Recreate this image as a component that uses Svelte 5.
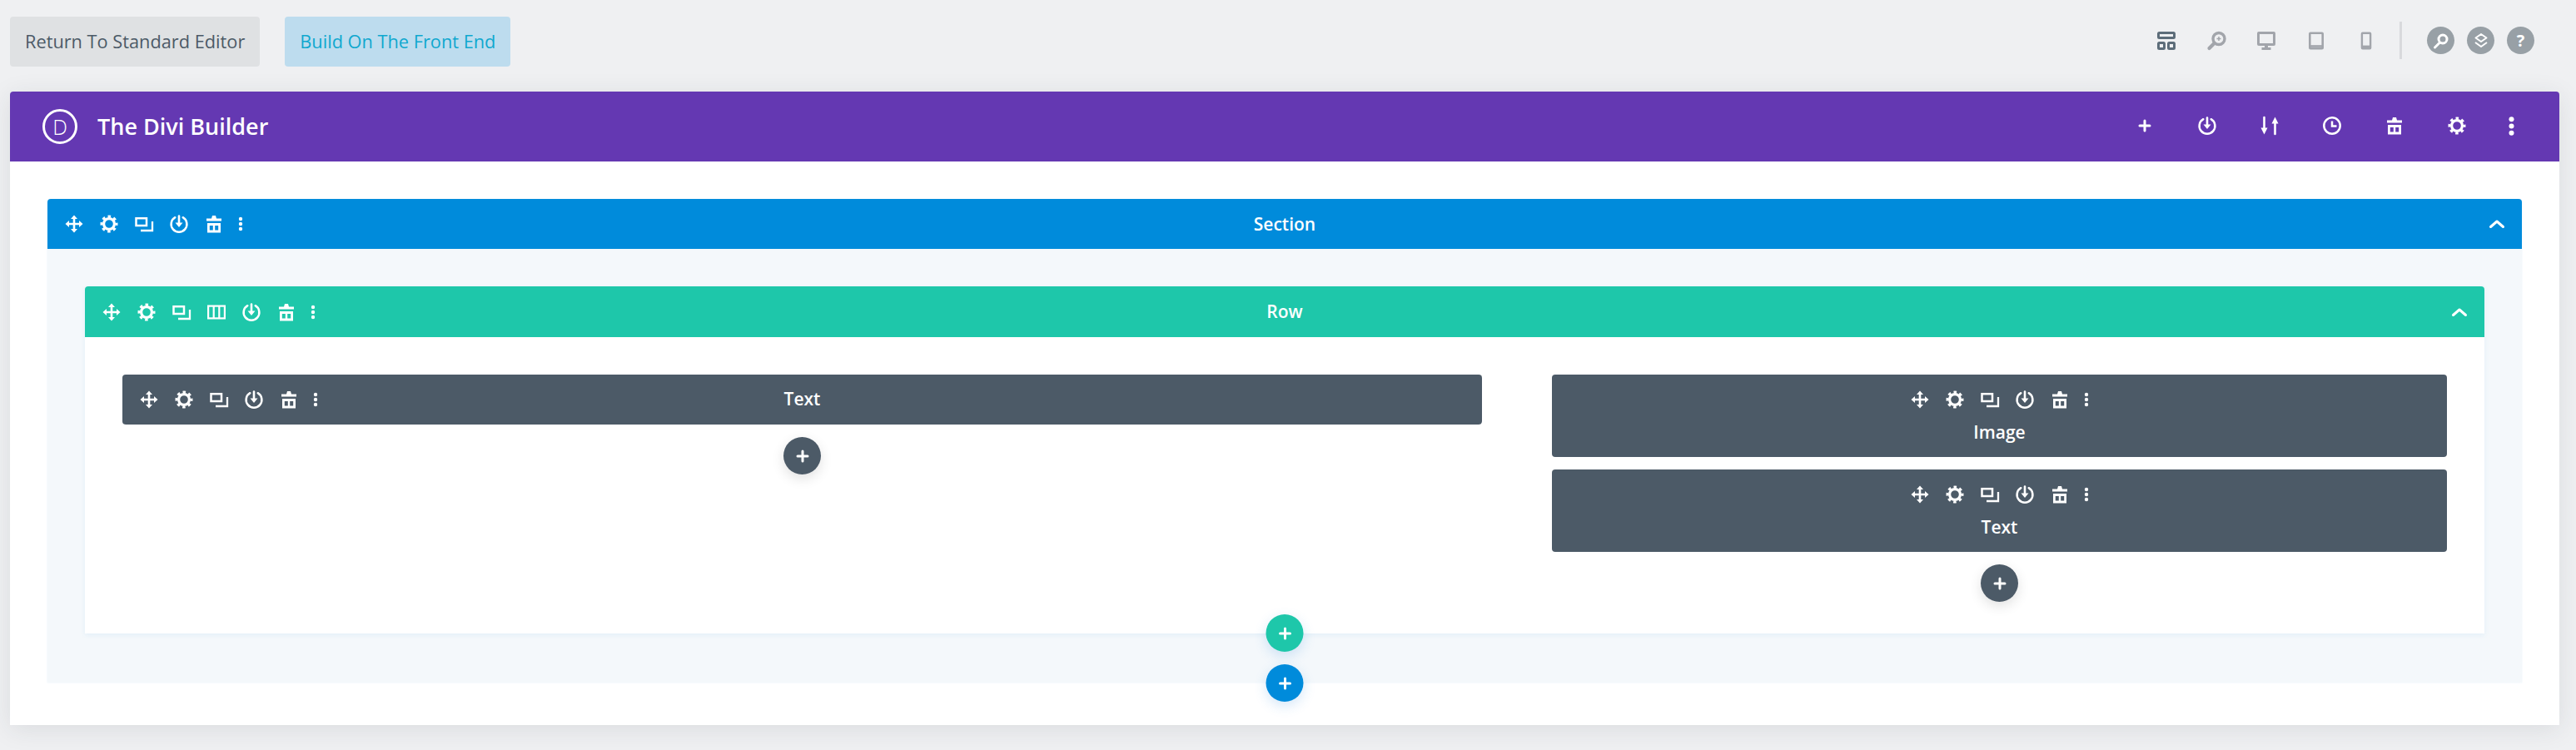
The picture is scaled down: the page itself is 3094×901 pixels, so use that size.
<script>
	const sectionTools = ['move', 'gear', 'copy', 'power', 'trash'];
	const rowTools = ['move', 'gear', 'copy', 'columns', 'power', 'trash'];
	const headerTools = ['plus', 'power', 'sort', 'clock', 'trash', 'gear'];
	const viewTools = ['layout', 'zoom', 'desktop', 'tablet', 'phone'];
</script>

{#snippet icon(name, size = 24)}
	<svg class="icon" width={size} height={size} viewBox="0 0 24 24" fill="none" stroke="currentColor" aria-hidden="true">
		{#if name === 'move'}
			<path d="M12 4v16M4 12h16" stroke-width="2.6" />
			<path d="M12 1.500l4 4.500H8zM12 22.500l-4-4.500h8zM1.500 12L6 8v8zM22.500 12L18 16V8z" fill="currentColor" stroke="none" />
		{:else if name === 'gear'}
			<circle cx="12" cy="12" r="6.400" stroke-width="3.200" />
			<circle cx="12" cy="12" r="8.900" stroke-width="3.200" stroke-dasharray="3.500 3.490" stroke-dashoffset="1.750" />
		{:else if name === 'copy'}
			<rect x="2.500" y="5.200" width="12.500" height="8.800" stroke-width="2.500" />
			<path d="M8 20h14V9" stroke-width="2.300" />
		{:else if name === 'power'}
			<path d="M7.300 4.200a9.400 9.400 0 1 0 9.400 0" stroke-width="2.500" stroke-linecap="round" />
			<path d="M12 2.500v9" stroke-width="2.600" stroke-linecap="round" />
			<path d="M7.500 10.500h9L12 16z" fill="currentColor" stroke="none" />
		{:else if name === 'trash'}
			<path fill-rule="evenodd" d="M9 5.500l1-3.500h4l1 3.500H21v3H3v-3zM4 11h16v11.500H4zM6.800 14v5.500h4V14zM13.200 14v5.500h4V14z" fill="currentColor" stroke="none" />
		{:else if name === 'dots'}
			<circle cx="12" cy="6" r="2.200" fill="currentColor" stroke="none" />
			<circle cx="12" cy="12" r="2.200" fill="currentColor" stroke="none" />
			<circle cx="12" cy="18" r="2.200" fill="currentColor" stroke="none" />
		{:else if name === 'columns'}
			<rect x="2.100" y="4.600" width="19.800" height="14.800" stroke-width="2.200" />
			<path d="M8.700 4.600v14.800M15.300 4.600v14.800" stroke-width="2.200" />
		{:else if name === 'chevron'}
			<path d="M4.500 15.500L12 9l7.500 6.500" stroke-width="3" stroke-linecap="round" stroke-linejoin="round" />
		{:else if name === 'plus'}
			<path d="M12 6v12M6 12h12" stroke-width="3" stroke-linecap="round" />
		{:else if name === 'sort'}
			<path d="M5.500 2v14M18.500 22V8" stroke-width="2.600" stroke-linecap="round" />
			<path d="M1.500 14.500h8L5.500 22.500zM14.500 9.500h8L18.500 1.500z" fill="currentColor" stroke="none" />
		{:else if name === 'clock'}
			<circle cx="12" cy="12" r="9.700" stroke-width="2.500" />
			<path d="M12 6.500v6h5.500" stroke-width="2.500" />
		{:else if name === 'layout'}
			<rect x="2.500" y="2.500" width="19" height="6" rx="1" stroke-width="3" />
			<rect x="2.500" y="14.500" width="7" height="7" rx="1" stroke-width="3" />
			<rect x="14.500" y="14.500" width="7" height="7" rx="1" stroke-width="3" />
		{:else if name === 'zoom'}
			<circle cx="15" cy="9.500" r="7" stroke-width="3.400" />
			<path d="M9 15.500L3.500 21" stroke-width="4.200" stroke-linecap="round" />
			<path d="M15 7v5M12.500 9.500h5" stroke-width="1.500" />
		{:else if name === 'desktop'}
			<rect x="2.500" y="2.500" width="19" height="14" rx="0.500" stroke-width="3" />
			<path d="M10 17h4v3h-4zM6.500 20h11v3h-11z" fill="currentColor" stroke="none" />
		{:else if name === 'tablet'}
			<rect x="4.300" y="2.800" width="15.400" height="18.400" rx="0.800" stroke-width="2.600" />
			<path d="M4 18.500h16" stroke-width="2.600" />
		{:else if name === 'phone'}
			<rect x="6.900" y="2.800" width="10.200" height="18.400" rx="0.800" stroke-width="2.400" />
			<path d="M7 18.800h10" stroke-width="2.400" />
		{:else if name === 'search'}
			<circle cx="14" cy="10" r="5" stroke-width="3" />
			<path d="M10 14.500L4.500 20" stroke-width="3" stroke-linecap="round" />
		{:else if name === 'layers'}
			<path d="M12 4l6.500 4.500L12 13 5.500 8.500z" stroke-width="2" stroke-linejoin="round" />
			<path d="M5 14l7 5 7-5" stroke-width="2" stroke-linejoin="round" />
		{/if}
	</svg>
{/snippet}

{#snippet tools(names)}
	<div class="tools">
		{#each names as name}
			<span class="tool">{@render icon(name)}</span>
		{/each}
		<span class="tool narrow">{@render icon('dots')}</span>
	</div>
{/snippet}

{#snippet addButton(kind)}
	<button class="add {kind}">{@render icon('plus')}</button>
{/snippet}

<div class="page">
	<header class="topbar">
		<div class="switches">
			<button class="switch">Return To Standard Editor</button>
			<button class="switch front">Build On The Front End</button>
		</div>
		<div class="views">
			{#each viewTools as name, i}
				<span class="view" class:current={i === 0}>{@render icon(name)}</span>
			{/each}
			<span class="divider"></span>
			<div class="rounds">
				<span class="round">{@render icon('search')}</span>
				<span class="round">{@render icon('layers')}</span>
				<span class="round question">?</span>
			</div>
		</div>
	</header>

	<main class="builder">
		<div class="builder-head">
			<div class="brand">
				<span class="logo">D</span>
				<h1>The Divi Builder</h1>
			</div>
			<div class="head-tools">
				{#each headerTools as name}
					<span class="head-tool">{@render icon(name)}</span>
				{/each}
				<span class="head-tool more">{@render icon('dots', 33)}</span>
			</div>
		</div>

		<div class="builder-body">
			<section class="section">
				<div class="bar">
					{@render tools(sectionTools)}
					<span class="label">Section</span>
					<span class="toggle">{@render icon('chevron')}</span>
				</div>
				<div class="section-body">
					<div class="row">
						<div class="bar row-bar">
							{@render tools(rowTools)}
							<span class="label">Row</span>
							<span class="toggle">{@render icon('chevron')}</span>
						</div>
						<div class="columns">
							<div class="column">
								<div class="module bar">
									{@render tools(sectionTools)}
									<span class="label">Text</span>
									<span></span>
								</div>
								{@render addButton('dark')}
							</div>
							<div class="column">
								<div class="module stacked">
									{@render tools(sectionTools)}
									<span class="label">Image</span>
								</div>
								<div class="module stacked">
									{@render tools(sectionTools)}
									<span class="label">Text</span>
								</div>
								{@render addButton('dark')}
							</div>
						</div>
						<div class="edge">{@render addButton('green')}</div>
					</div>
				</div>
				<div class="edge">{@render addButton('blue')}</div>
			</section>
		</div>
	</main>
</div>

<style>
	:global(body) {
		background: #eff0f2;
	}

	.page {
		height: 901px;
		padding: 0 20px 0 12px;
		box-sizing: border-box;
		font-family: "Open Sans", "Liberation Sans", sans-serif;
		overflow: hidden;
	}

	.icon {
		display: block;
		flex: none;
	}

	.topbar {
		display: flex;
		justify-content: space-between;
		height: 110px;
		padding: 20px 30px 0 0;
		box-sizing: border-box;
	}

	.switches {
		display: flex;
		gap: 30px;
	}

	.switch {
		height: 60px;
		padding: 0 18px 2px;
		border: 0;
		border-radius: 4px;
		background: #dfe1e3;
		color: #4c5a67;
		font: 500 21.75px "Open Sans", sans-serif;
	}

	.switch.front {
		background: #bddcee;
		color: #0fa8cf;
	}

	.views {
		display: flex;
		align-items: center;
		height: 45px;
		margin-top: 6px;
	}

	.view {
		display: flex;
		justify-content: center;
		width: 60px;
		color: #a2a5ab;
	}

	.view.current {
		color: #5d6d7a;
	}

	.divider {
		width: 3px;
		height: 45px;
		margin: 0 30px 0 10px;
		background: #d8d9dc;
	}

	.rounds {
		display: flex;
		gap: 15px;
	}

	.round {
		display: flex;
		align-items: center;
		justify-content: center;
		width: 33px;
		height: 33px;
		border-radius: 50%;
		background: #98a0a6;
		color: #fff;
	}

	.question {
		font-size: 20px;
		font-weight: 700;
	}

	.builder {
		background: #fff;
		border-radius: 4px 4px 0 0;
		box-shadow: 0 5px 30px rgba(43, 45, 60, 0.1);
	}

	.builder-head {
		display: flex;
		justify-content: space-between;
		align-items: center;
		height: 84px;
		padding: 0 29px 0 39px;
		background: #6438b2;
		border-radius: 4px 4px 0 0;
		color: #fff;
	}

	.brand {
		display: flex;
		align-items: center;
		gap: 24px;
	}

	.logo {
		display: flex;
		align-items: center;
		justify-content: center;
		width: 42px;
		height: 42px;
		box-sizing: border-box;
		border: 3px solid #fff;
		border-radius: 50%;
		font-size: 25px;
		font-weight: 300;
	}

	h1 {
		margin: 0 0 2px;
		font-size: 27px;
		font-weight: 600;
	}

	.head-tools {
		display: flex;
		align-items: center;
		margin-top: -2px;
	}

	.head-tool {
		display: flex;
		justify-content: center;
		width: 75px;
	}

	.head-tool.more {
		width: 57px;
	}

	.builder-body {
		padding: 45px 45px 51px;
	}

	.section {
		position: relative;
		background: #f4f8fb;
		border-radius: 4px 4px 0 0;
		box-shadow: 0 0 2px rgba(43, 135, 218, 0.12);
	}

	.bar {
		display: grid;
		grid-template-columns: 1fr auto 1fr;
		align-items: center;
		height: 60px;
		padding: 0 11px;
		background: #008bdb;
		border-radius: 4px 4px 0 0;
		color: #fff;
	}

	.row-bar {
		height: 61px;
		background: #1ec7aa;
	}

	.label {
		font-size: 21px;
		font-weight: 600;
		line-height: 18px;
		margin-bottom: 1px;
	}

	.row-bar .label,
	.module .label {
		margin-bottom: 2px;
	}

	.toggle {
		justify-self: end;
		margin-right: 7px;
	}

	.tools {
		display: flex;
	}

	.tool {
		display: flex;
		justify-content: center;
		width: 42px;
	}

	.tool.narrow {
		width: 22px;
	}

	.section-body {
		padding: 45px 45px 59px;
	}

	.row {
		position: relative;
		background: #fff;
		border-radius: 4px 4px 0 0;
		box-shadow: 0 2px 6px rgba(43, 135, 218, 0.08);
	}

	.columns {
		display: grid;
		grid-template-columns: 1633fr 1075fr;
		gap: 84px;
		padding: 45px 45px 38px;
	}

	.column {
		display: flex;
		flex-direction: column;
		align-items: center;
		gap: 15px;
	}

	.module {
		width: 100%;
		box-sizing: border-box;
		background: #4c5a67;
		border-radius: 4px;
		color: #fff;
	}

	.stacked {
		display: flex;
		flex-direction: column;
		align-items: center;
		padding-bottom: 19px;
	}

	.stacked .tools {
		align-items: center;
		height: 60px;
		margin-right: 1px;
	}

	.add {
		display: flex;
		align-items: center;
		justify-content: center;
		width: 45px;
		height: 45px;
		padding: 0;
		border: 0;
		border-radius: 50%;
		color: #fff;
	}

	.add.dark {
		background: #4c5a67;
		box-shadow: 0 5px 15px rgba(0, 0, 0, 0.12);
	}

	.add.green {
		background: #1ec7aa;
		box-shadow: 0 5px 15px rgba(43, 135, 218, 0.2);
	}

	.add.blue {
		background: #008bdb;
		box-shadow: 0 5px 15px rgba(43, 135, 218, 0.2);
	}

	.edge {
		position: absolute;
		left: 50%;
		bottom: -23px;
		transform: translateX(-50%);
		z-index: 1;
	}

	.row > .edge {
		bottom: -22px;
	}
</style>
